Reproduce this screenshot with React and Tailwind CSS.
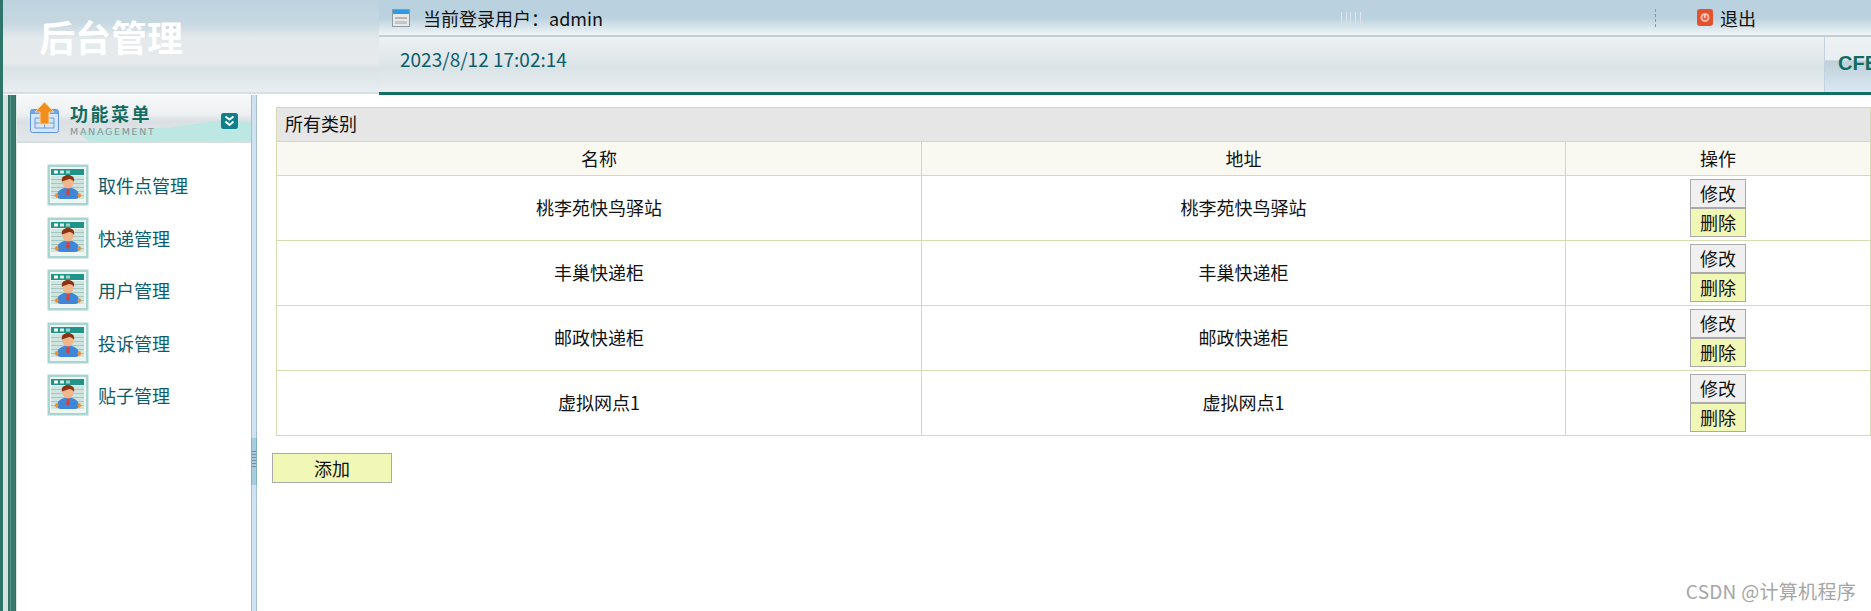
const cjk = '"Noto Sans CJK SC", "Noto Sans", sans-serif';

function UserIcon() {
  return (
    <svg width="42" height="42" viewBox="0 0 42 42" className="shrink-0">
      <rect x="0.5" y="0.5" width="41" height="41" fill="#a9d5d1" />
      <rect x="3" y="3" width="36" height="36" fill="#eef6f4" />
      <rect x="4" y="5" width="33" height="6" fill="#1f9488" />
      <rect x="7" y="6.5" width="4" height="3" fill="#fff" />
      <rect x="13" y="6.5" width="4" height="3" fill="#d7eee9" />
      <rect x="19" y="6.5" width="4" height="3" fill="#9fd0ca" />
      <rect x="4" y="12" width="33" height="23" fill="#cfe4df" />
      {[15, 19, 23, 27, 31].map((y) => (
        <rect key={y} x="4" y={y} width="33" height="1" fill="#a6c8c2" />
      ))}
      <path d="M10 32c0-5 4-7 7-8h8c3 1 7 3 7 8 0 2-2 3-4 3H14c-2 0-4-1-4-3z" fill="#3f86d6" />
      <path d="M9 29l-1.500 3 2.500 2 2-3zM33 29l1.500 3-2.500 2-2-3z" fill="#f0902c" />
      <path d="M20 24h2l1 6-2 2-2-2z" fill="#d8403a" />
      <ellipse cx="21" cy="18.500" rx="5.500" ry="6" fill="#f2b68c" />
      <path d="M15 18c-1-5 2-7 6-7s7 2 6 7c-1-2-3-3-5-3-1 1-5 1-7 3z" fill="#8a3414" />
    </svg>
  );
}

function BarIcon() {
  return (
    <svg width="18" height="18" viewBox="0 0 18 18">
      <rect x="0.5" y="0.5" width="17" height="17" fill="#e8e8e8" stroke="#8f9aa5" />
      <rect x="1" y="1" width="16" height="4" fill="#2c9be6" />
      <rect x="3" y="8" width="12" height="2" fill="#b5b5b5" />
      <rect x="3" y="12" width="12" height="3" fill="#c5c5c5" />
    </svg>
  );
}

function MenuIcon() {
  return (
    <svg width="30" height="32" viewBox="0 0 30 32">
      <rect x="0.5" y="7.500" width="28" height="23" rx="2" fill="#d5e6f9" stroke="#5b93dd" />
      <rect x="1" y="8" width="27" height="4" fill="#6ea4ea" />
      <path d="M5 16h19v10H5z M5 21h19 M14.500 16v10" fill="none" stroke="#6b9de0" />
      <path d="M14.500 0L24 10h-5v12h-9V10H5z" fill="#f28f1c" stroke="#f7d79a" />
    </svg>
  );
}

function Chevrons() {
  return (
    <svg width="17" height="16" viewBox="0 0 17 16">
      <rect width="17" height="16" rx="2.500" fill="#0f7f8c" />
      <path d="M4.500 3.500l4 3 4-3M4.500 8.500l4 3.500 4-3.500" fill="none" stroke="#fff" strokeWidth="2" />
    </svg>
  );
}

function ExitIcon() {
  return (
    <svg width="16" height="17" viewBox="0 0 16 17">
      <rect width="16" height="17" rx="3" fill="#e5502f" />
      <circle cx="8" cy="8.500" r="4.500" fill="#f6b8a0" />
      <circle cx="8" cy="8.500" r="2.500" fill="#e5603f" />
      <rect x="7.400" y="5" width="1.200" height="4" fill="#fff" />
    </svg>
  );
}

const rows = ['桃李苑快鸟驿站', '丰巢快递柜', '邮政快递柜', '虚拟网点1'];
const menu = ['取件点管理', '快递管理', '用户管理', '投诉管理', '贴子管理'];

export default function App() {
  return (
    <div className="relative flex h-screen w-full flex-col overflow-hidden bg-white text-[18px] leading-none text-[#111]" style={{ fontFamily: cjk }}>
      <header className="flex h-[95px] shrink-0">
        <div className="w-[3px] shrink-0 bg-[#2f7468]" />
        <div className="flex h-[94px] w-[376px] shrink-0 items-start border-b-2 border-[#d2e0e8] bg-[linear-gradient(180deg,#bdd3df_0%,#c6d8e2_25%,#e4e9ec_42%,#e6eaed_68%,#d9e2e6_74%,#e8eef1_100%)] pl-[36px] pt-[17px] text-[36px] font-bold leading-[38px] text-white">
          后台管理
        </div>
        <div className="flex min-w-0 flex-1 flex-col border-b-[3px] border-[#126f64]">
          <div className="flex h-[37px] shrink-0 items-center border-b-2 border-[#c0d0da] bg-[linear-gradient(180deg,#bad1df_0%,#bad1df_50%,#f0f4f6_100%)]">
            <div className="ml-[13px]"><BarIcon /></div>
            <span className="ml-[13px] text-[18px] text-[#111]">当前登录用户：admin</span>
            <div className="ml-[738px] flex h-[12px] w-[20px] justify-between">
              {[0, 1, 2, 3, 4].map((i) => <span key={i} className="w-[1px] bg-[#dce6ec]" />)}
            </div>
            <div className="ml-[294px] h-[18px] w-0 border-l border-dashed border-[#8a979f]" />
            <div className="ml-[41px]"><ExitIcon /></div>
            <span className="ml-[7px] text-[18px] text-[#111]">退出</span>
          </div>
          <div className="flex min-h-0 flex-1">
            <div className="flex-1 bg-[linear-gradient(180deg,#edf1f3_0%,#e0e7ea_40%,#d9e3e6_55%,#e9eef1_100%)] pl-[21px] pt-[10px] text-[19px] leading-[24px] text-[#0d5c6d]">
              2023/8/12 17:02:14
            </div>
            <div className="h-full w-[47px] shrink-0 overflow-hidden border-l border-[#c3d2dc] bg-[linear-gradient(180deg,#edf1f3_0%,#e8eef1_42%,#bfd0da_43%,#dae8f3_100%)] pl-[13px] pt-[15px] text-[20px] font-bold leading-[22px] text-[#136c60]" style={{ fontFamily: '"Liberation Sans", sans-serif' }}>
              CFE
            </div>
          </div>
        </div>
      </header>

      <div className="flex min-h-0 flex-1">
        <div className="flex w-[17px] shrink-0">
          <div className="w-[3px] bg-[#2f7468]" />
          <div className="w-[5px] bg-[#d5e2de]" />
          <div className="w-[2px] bg-[#2f7468]" />
          <div className="w-[1px] bg-[#5a9488]" />
          <div className="w-[4px] bg-[#397a6e]" />
          <div className="w-[1px] bg-[#2f6e62]" />
          <div className="w-[1px] bg-[#dfe9e6]" />
        </div>
        <aside className="flex w-[234px] shrink-0 flex-col">
          <div className="relative flex h-[48px] shrink-0 items-start overflow-hidden border-b-2 border-[#d6dfe0] bg-[linear-gradient(180deg,#f6f8f8_0%,#eef1f2_40%,#d9dfe2_58%,#e3e9ea_100%)]">
            <div className="absolute bottom-0 right-0 h-[26px] w-[194px] bg-[#bde7e2] [clip-path:polygon(10%_62%,58%_48%,86%_18%,100%_30%,100%_100%,16%_100%)]" />
            <div className="relative ml-[13px] mt-[7px]"><MenuIcon /></div>
            <div className="relative ml-[10px] mt-[8px]">
              <div className="text-[18px] font-bold leading-[20px] tracking-[2.5px] text-[#136c60]">功能菜单</div>
              <div className="mt-[3px] text-[9.500px] leading-[11px] tracking-[1.700px] text-[#8a9396]" style={{ fontFamily: '"DejaVu Sans", sans-serif' }}>MANAGEMENT</div>
            </div>
            <div className="absolute left-[204px] top-[18px]"><Chevrons /></div>
          </div>
          <nav className="flex flex-col gap-[10.500px] pl-[30px] pt-[21px]">
            {menu.map((m) => (
              <div key={m} className="flex h-[42px] items-center gap-[9px] text-[18px] text-[#0d5c6d]">
                <UserIcon />
                <span>{m}</span>
              </div>
            ))}
          </nav>
        </aside>
        <div className="relative w-[6px] shrink-0 border-x border-[#a5bfd4] bg-[#cfe2f1]">
          <div className="absolute -left-[1px] top-[343px] flex h-[47px] w-[6px] flex-col gap-[2px] border-x border-[#7fb0c8] bg-[#a6cde0] pt-[13px]">
            {[0, 1, 2, 3, 4, 5].map((i) => <span key={i} className="h-[1px] shrink-0 bg-[#7d8d96]" />)}
          </div>
        </div>
        <main className="min-w-0 flex-1 pl-[15px] pt-[12px]">
          <div className="ml-[4px] w-[1594px]">
            <table className="w-full table-fixed border-collapse text-center">
              <colgroup>
                <col className="w-[645px]" />
                <col className="w-[644px]" />
                <col className="w-[305px]" />
              </colgroup>
              <thead>
                <tr className="h-[34px] bg-[#e6e6e6]">
                  <th colSpan={3} className="border border-[#d5dbae] pb-[3px] pl-[8px] text-left font-normal">所有类别</th>
                </tr>
                <tr className="h-[34px] bg-[#f9f9f1]">
                  <th className="border border-[#d5dbae] pb-[2px] font-normal">名称</th>
                  <th className="border border-[#d5dbae] pb-[2px] font-normal">地址</th>
                  <th className="border border-[#d5dbae] pb-[2px] font-normal">操作</th>
                </tr>
              </thead>
              <tbody>
                {rows.map((r) => (
                  <tr key={r} className="h-[65px]">
                    <td className="border border-[#d5dbae] pb-[2px]">{r}</td>
                    <td className="border border-[#d5dbae] pb-[2px]">{r}</td>
                    <td className="border border-[#d5dbae]">
                      <div className="flex flex-col items-center">
                        <button className="h-[29px] w-[56px] border border-[#aaa] bg-[#f0f0f0] pb-[1px]">修改</button>
                        <button className="h-[29px] w-[56px] border border-[#aaa] bg-[#f1f7b5] pb-[1px]">删除</button>
                      </div>
                    </td>
                  </tr>
                ))}
              </tbody>
            </table>
          </div>
          <button className="mt-[17px] h-[30px] w-[120px] border border-[#aaa] bg-[#f1f7b5] pb-[1px]">添加</button>
        </main>
      </div>
      <div className="absolute bottom-[9px] right-[15px] text-[19px] leading-[22px] tracking-[0.3px] text-[#a5a5a5]">CSDN @计算机程序</div>
    </div>
  );
}
